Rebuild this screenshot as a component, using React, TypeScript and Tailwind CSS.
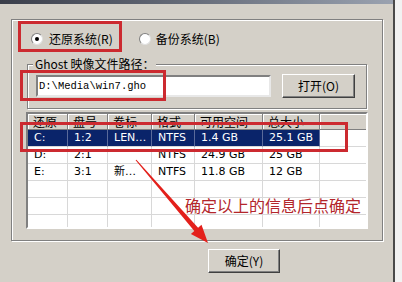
import React from 'react';

const cjk = "font-['Noto_Sans_CJK_SC',sans-serif]";
const cell = "font-['DejaVu_Sans','Noto_Sans_CJK_SC',sans-serif]";

const colW = ['w-[40px]', 'w-[40px]', 'w-[44px]', 'w-[43px]', 'w-[68px]', 'w-[57px]'];
const heads = ['还原', '盘号', '卷标', '格式', '可用空间', '总大小'];
const rows = [
  ['C:', '1:2', 'LEN…', 'NTFS', '1.4 GB', '25.1 GB'],
  ['D:', '2:1', '', 'NTFS', '24.9 GB', '25 GB'],
  ['E:', '3:1', '新…', 'NTFS', '11.8 GB', '12 GB'],
  ['', '', '', '', '', ''],
  ['', '', '', '', '', ''],
  ['', '', '', '', '', ''],
];

const Radio = ({ on }: { on?: boolean }) => (
  <div className="w-[12px] h-[12px] rounded-full bg-white border border-t-[#808080] border-l-[#808080] border-r-[#e0e0e0] border-b-[#e0e0e0] flex items-center justify-center">
    {on && <div className="w-[4px] h-[4px] rounded-full bg-black" />}
  </div>
);

const Btn = ({ label, w }: { label: string; w: string }) => (
  <div className={`${w} h-[24px] bg-[#d4d0c8] border border-t-white border-l-white border-r-[#404040] border-b-[#404040] shadow-[inset_-1px_-1px_0_#808080] flex items-center justify-center text-[12px] leading-[12px] text-black ${cjk}`}>
    {label}
  </div>
);

const App = () => {
  return (
    <div className="relative w-[402px] h-[282px] overflow-hidden bg-[#f2f2f2] flex">
      <div className="w-[395px] h-full bg-[#d4d0c8] border-r-2 border-[#4a4a4a] flex flex-col">
        <div className="h-[4px] bg-gradient-to-r from-[#3a3e4a] to-[#9aa2b0]" />
        <div className="pt-[15px] pl-[11px]">
          {/* outer group */}
          <div className="w-[372px] h-[222px] border border-[#808080] shadow-[inset_1px_1px_0_#fff,1px_1px_0_#fff] pt-[13px]">
            <div className="flex items-center h-[12px] pl-[19px]">
              <Radio on />
              <span className={`ml-[6px] text-[12px] leading-[12px] text-black ${cjk}`}>还原系统(R)</span>
              <div className="ml-[26px]">
                <Radio />
              </div>
              <span className={`ml-[5px] text-[12px] leading-[12px] text-black ${cjk}`}>备份系统(B)</span>
            </div>

            {/* ghost group */}
            <div className="ml-[15px] mt-[19px] w-[340px] h-[45px] border border-[#808080] shadow-[inset_1px_1px_0_#fff,1px_1px_0_#fff]">
              <div className={`-mt-[8px] ml-[5px] px-[2px] w-fit h-[14px] bg-[#d4d0c8] text-[12px] leading-[14px] text-black ${cjk}`}>
                Ghost 映像文件路径：
              </div>
              <div className="mt-[3px] pl-[8px] flex items-center h-[24px]">
                <div className="w-[235px] h-[22px] bg-white border-2 border-t-[#808080] border-l-[#808080] border-r-[#e8e8e8] border-b-[#e8e8e8] flex items-center pl-[1px]">
                  <span className="font-['Liberation_Mono',monospace] text-[10.5px] leading-[12px] text-black">D:\Media\win7.gho</span>
                </div>
                <div className="ml-[11px]">
                  <Btn label="打开(O)" w="w-[73px]" />
                </div>
              </div>
            </div>

            {/* list */}
            <div className="ml-[14px] mt-[3px] w-[342px] h-[117px] bg-white border-2 border-t-[#808080] border-l-[#808080] border-r-white border-b-white shadow-[inset_1px_1px_0_#404040] overflow-hidden">
              <div className="flex h-[16px] bg-[#d4d0c8]">
                {heads.map((h, i) => (
                  <div key={i} className={`${colW[i]} h-full border-r border-b border-r-[#808080] border-b-[#808080] shadow-[inset_1px_1px_0_#fff] pl-[5px] text-[12px] leading-[15px] text-black ${cjk}`}>
                    {h}
                  </div>
                ))}
                <div className="flex-1 h-full border-b border-[#808080] shadow-[inset_1px_1px_0_#fff]" />
              </div>
              {rows.map((r, ri) => (
                <div key={ri} className="flex h-[17px]">
                  {r.map((c, ci) => (
                    <div
                      key={ci}
                      className={`${colW[ci]} h-full border-r border-b pl-[6px] text-[11px] leading-[16px] whitespace-nowrap ${cell} ${
                        ri === 0 ? 'bg-[#0a246a] text-white border-r-[#5a6a9a] border-b-[#d8d8d8]' : 'bg-white text-black border-[#d8d8d8]'
                      }`}
                    >
                      {c}
                    </div>
                  ))}
                  <div className="flex-1 h-full border-b border-[#d8d8d8]" />
                </div>
              ))}
            </div>
          </div>

          <div className="mt-[8px] ml-[197px]">
            <Btn label="确定(Y)" w="w-[72px]" />
          </div>
        </div>
      </div>

      {/* annotations */}
      <div className="absolute left-[18px] top-[21px] w-[104px] h-[31px] border-[3px] border-[#cc2a30]" />
      <div className="absolute left-[20px] top-[70px] w-[146px] h-[31px] border-[3px] border-[#cc2a30]" />
      <div className="absolute left-[20px] top-[122px] w-[328px] h-[30px] border-[3px] border-[#cc2a30]" />
      <svg className="absolute left-0 top-0" width="402" height="282" viewBox="0 0 402 282">
        <polygon
          points="135.6,160.3 194.3,231.0 190.9,234.0 208,243 201.5,224.8 198.1,227.8 136.4,159.7"
          fill="#e3201b"
        />
      </svg>
      <div className={`absolute left-[185px] top-[195px] text-[16px] leading-[20px] text-[#b3262b] whitespace-nowrap ${cjk}`}>
        确定以上的信息后点确定
      </div>
    </div>
  );
};

export default App;
